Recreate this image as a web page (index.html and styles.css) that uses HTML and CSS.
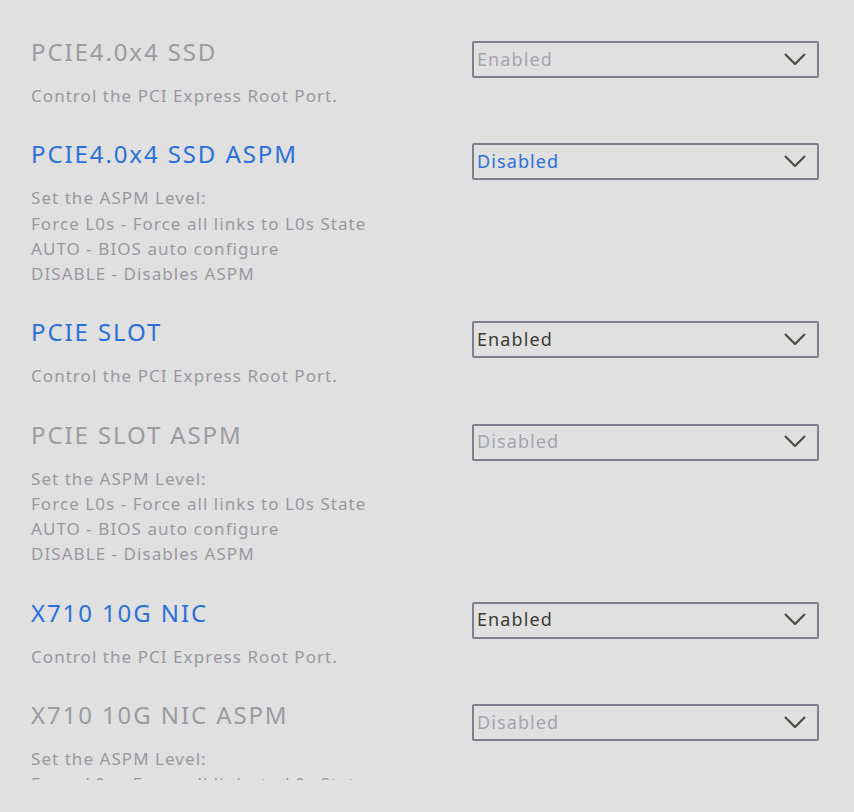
FILE: index.html
```html
<!DOCTYPE html>
<html>
<head>
<meta charset="utf-8">
<link rel="stylesheet" href="styles.css">
</head>
<body>
<div class="list">
  <div class="item">
    <div class="info">
      <div class="title dim">PCIE4.0x4 SSD</div>
      <div class="desc">Control the PCI Express Root Port.</div>
    </div>
    <div class="select dim"><span>Enabled</span><svg class="chev" viewBox="0 0 22 12"><path d="M1 1 L11 11 L21 1"/></svg></div>
  </div>
  <div class="item">
    <div class="info">
      <div class="title active">PCIE4.0x4 SSD ASPM</div>
      <div class="desc">Set the ASPM Level:<br>Force L0s - Force all links to L0s State<br>AUTO - BIOS auto configure<br>DISABLE - Disables ASPM</div>
    </div>
    <div class="select active"><span>Disabled</span><svg class="chev" viewBox="0 0 22 12"><path d="M1 1 L11 11 L21 1"/></svg></div>
  </div>
  <div class="item">
    <div class="info">
      <div class="title active">PCIE SLOT</div>
      <div class="desc">Control the PCI Express Root Port.</div>
    </div>
    <div class="select"><span>Enabled</span><svg class="chev" viewBox="0 0 22 12"><path d="M1 1 L11 11 L21 1"/></svg></div>
  </div>
  <div class="item">
    <div class="info">
      <div class="title dim">PCIE SLOT ASPM</div>
      <div class="desc">Set the ASPM Level:<br>Force L0s - Force all links to L0s State<br>AUTO - BIOS auto configure<br>DISABLE - Disables ASPM</div>
    </div>
    <div class="select dim"><span>Disabled</span><svg class="chev" viewBox="0 0 22 12"><path d="M1 1 L11 11 L21 1"/></svg></div>
  </div>
  <div class="item">
    <div class="info">
      <div class="title active">X710 10G NIC</div>
      <div class="desc">Control the PCI Express Root Port.</div>
    </div>
    <div class="select"><span>Enabled</span><svg class="chev" viewBox="0 0 22 12"><path d="M1 1 L11 11 L21 1"/></svg></div>
  </div>
  <div class="item">
    <div class="info">
      <div class="title dim">X710 10G NIC ASPM</div>
      <div class="desc">Set the ASPM Level:<br>Force L0s - Force all links to L0s State<br>AUTO - BIOS auto configure<br>DISABLE - Disables ASPM</div>
    </div>
    <div class="select dim"><span>Disabled</span><svg class="chev" viewBox="0 0 22 12"><path d="M1 1 L11 11 L21 1"/></svg></div>
  </div>
</div>
</body>
</html>
```
FILE: styles.css
```css
html, body {
  margin: 0;
  padding: 0;
  background: #e0e0e0;
  height: 100%;
}
body {
  font-family: "Noto Sans", "Open Sans", sans-serif;
}
.list {
  height: 780px;
  overflow: hidden;
  padding: 37px 0 0 31px;
  box-sizing: border-box;
}
.item {
  display: grid;
  grid-template-columns: 441px 347px;
  align-items: start;
  margin-bottom: 31.2px;
}
.title {
  font-size: 24px;
  line-height: 30px;
  letter-spacing: 1.9px;
  margin-bottom: 16px;
  color: #9b9ba1;
}
.title.active {
  color: #2b70d8;
}
.desc {
  font-size: 17px;
  line-height: 25.2px;
  letter-spacing: 1.05px;
  color: #98989f;
}
.select {
  margin-top: 4px;
  height: 37px;
  box-sizing: border-box;
  border: 2px solid #7f7f8d;
  border-radius: 2px;
  display: flex;
  align-items: center;
  justify-content: space-between;
  padding: 0 11px 2px 3px;
  font-size: 18px;
  letter-spacing: 1.1px;
  color: #3b3b33;
}
.select.dim {
  color: #a4a4ae;
}
.select.active {
  color: #2b70d8;
}
.chev {
  width: 22px;
  height: 12px;
  fill: none;
  stroke: #4c4c40;
  stroke-width: 2.2;
}
```
